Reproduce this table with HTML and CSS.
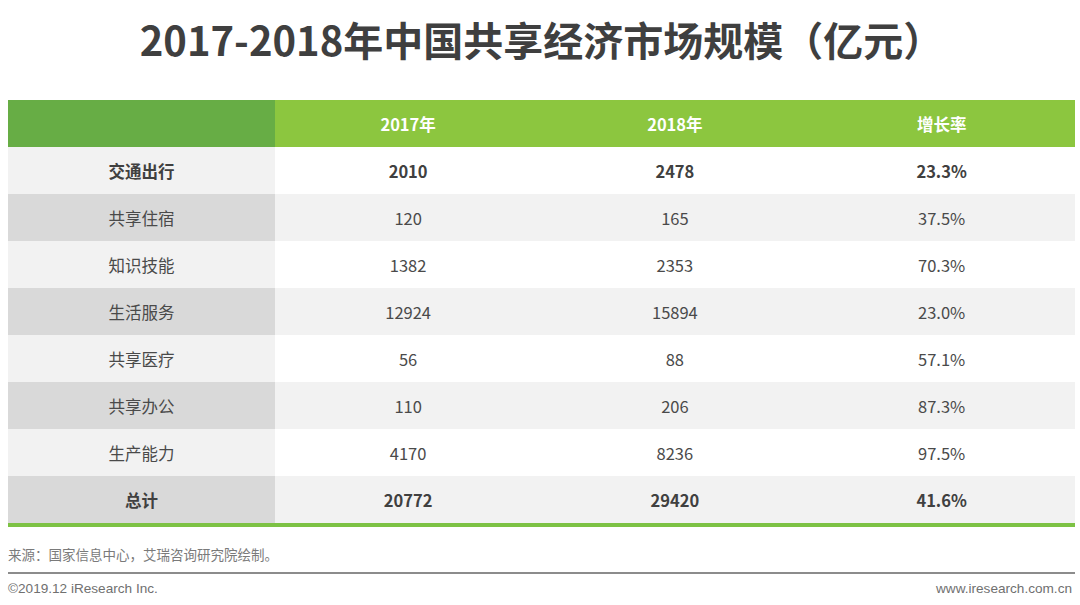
FILE: index.html
```html
<!DOCTYPE html>
<html lang="zh-CN">
<head>
<meta charset="utf-8">
<title>2017-2018年中国共享经济市场规模（亿元）</title>
<link rel="stylesheet" href="styles.css">
</head>
<body>
<div class="page">
  <h1 class="title">2017-2018年中国共享经济市场规模（亿元）</h1>
  <table class="data">
    <thead>
      <tr><th class="first"></th><th>2017年</th><th>2018年</th><th>增长率</th></tr>
    </thead>
    <tbody>
      <tr class="odd strong"><td class="first">交通出行</td><td>2010</td><td>2478</td><td>23.3%</td></tr>
      <tr class="even"><td class="first">共享住宿</td><td>120</td><td>165</td><td>37.5%</td></tr>
      <tr class="odd"><td class="first">知识技能</td><td>1382</td><td>2353</td><td>70.3%</td></tr>
      <tr class="even"><td class="first">生活服务</td><td>12924</td><td>15894</td><td>23.0%</td></tr>
      <tr class="odd"><td class="first">共享医疗</td><td>56</td><td>88</td><td>57.1%</td></tr>
      <tr class="even"><td class="first">共享办公</td><td>110</td><td>206</td><td>87.3%</td></tr>
      <tr class="odd"><td class="first">生产能力</td><td>4170</td><td>8236</td><td>97.5%</td></tr>
      <tr class="even strong total"><td class="first">总计</td><td>20772</td><td>29420</td><td>41.6%</td></tr>
    </tbody>
  </table>
  <div class="source">来源：国家信息中心，艾瑞咨询研究院绘制。</div>
  <div class="foot">
    <span>©2019.12 iResearch Inc.</span>
    <span>www.iresearch.com.cn</span>
  </div>
</div>
</body>
</html>
```

FILE: styles.css
```css
html, body {
  margin: 0;
  padding: 0;
  background: #ffffff;
}
.page {
  width: 1080px;
  height: 605px;
  padding: 0 5px 0 8px;
  box-sizing: border-box;
  font-family: "Noto Sans CJK SC", "Noto Sans", sans-serif;
  color: #404040;
}
.title {
  margin: 0;
  height: 100px;
  padding-top: 12px;
  box-sizing: border-box;
  text-align: center;
  font-size: 40px;
  line-height: 54px;
  font-weight: 700;
  letter-spacing: 0;
  color: #3f3f3f;
}
.data {
  width: 1067px;
  border-collapse: collapse;
  table-layout: fixed;
  border-bottom: 4px solid #7dc244;
}
.data th, .data td {
  height: 47px;
  padding: 0;
  text-align: center;
  vertical-align: middle;
  font-size: 16.5px;
  line-height: 20px;
}
.data th {
  background: #8cc63f;
  color: #ffffff;
  font-weight: 700;
}
.data th.first {
  background: #67ad45;
}
.data td {
  font-weight: 400;
  color: #4a4a4a;
}
.odd td { background: #ffffff; }
.odd td.first { background: #f2f2f2; }
.even td { background: #f2f2f2; }
.even td.first { background: #d9d9d9; }
.strong td {
  font-weight: 700;
  color: #404040;
}
.source {
  margin-top: 17px;
  padding-bottom: 8px;
  font-size: 13.5px;
  line-height: 20px;
  color: #7a7a7a;
  border-bottom: 2px solid #8c8c8c;
}
.foot {
  display: flex;
  justify-content: space-between;
  padding: 7px 3px 0 0;
  font-family: "Liberation Sans", Arial, sans-serif;
  font-size: 13.6px;
  line-height: 16px;
  color: #707070;
}
```
